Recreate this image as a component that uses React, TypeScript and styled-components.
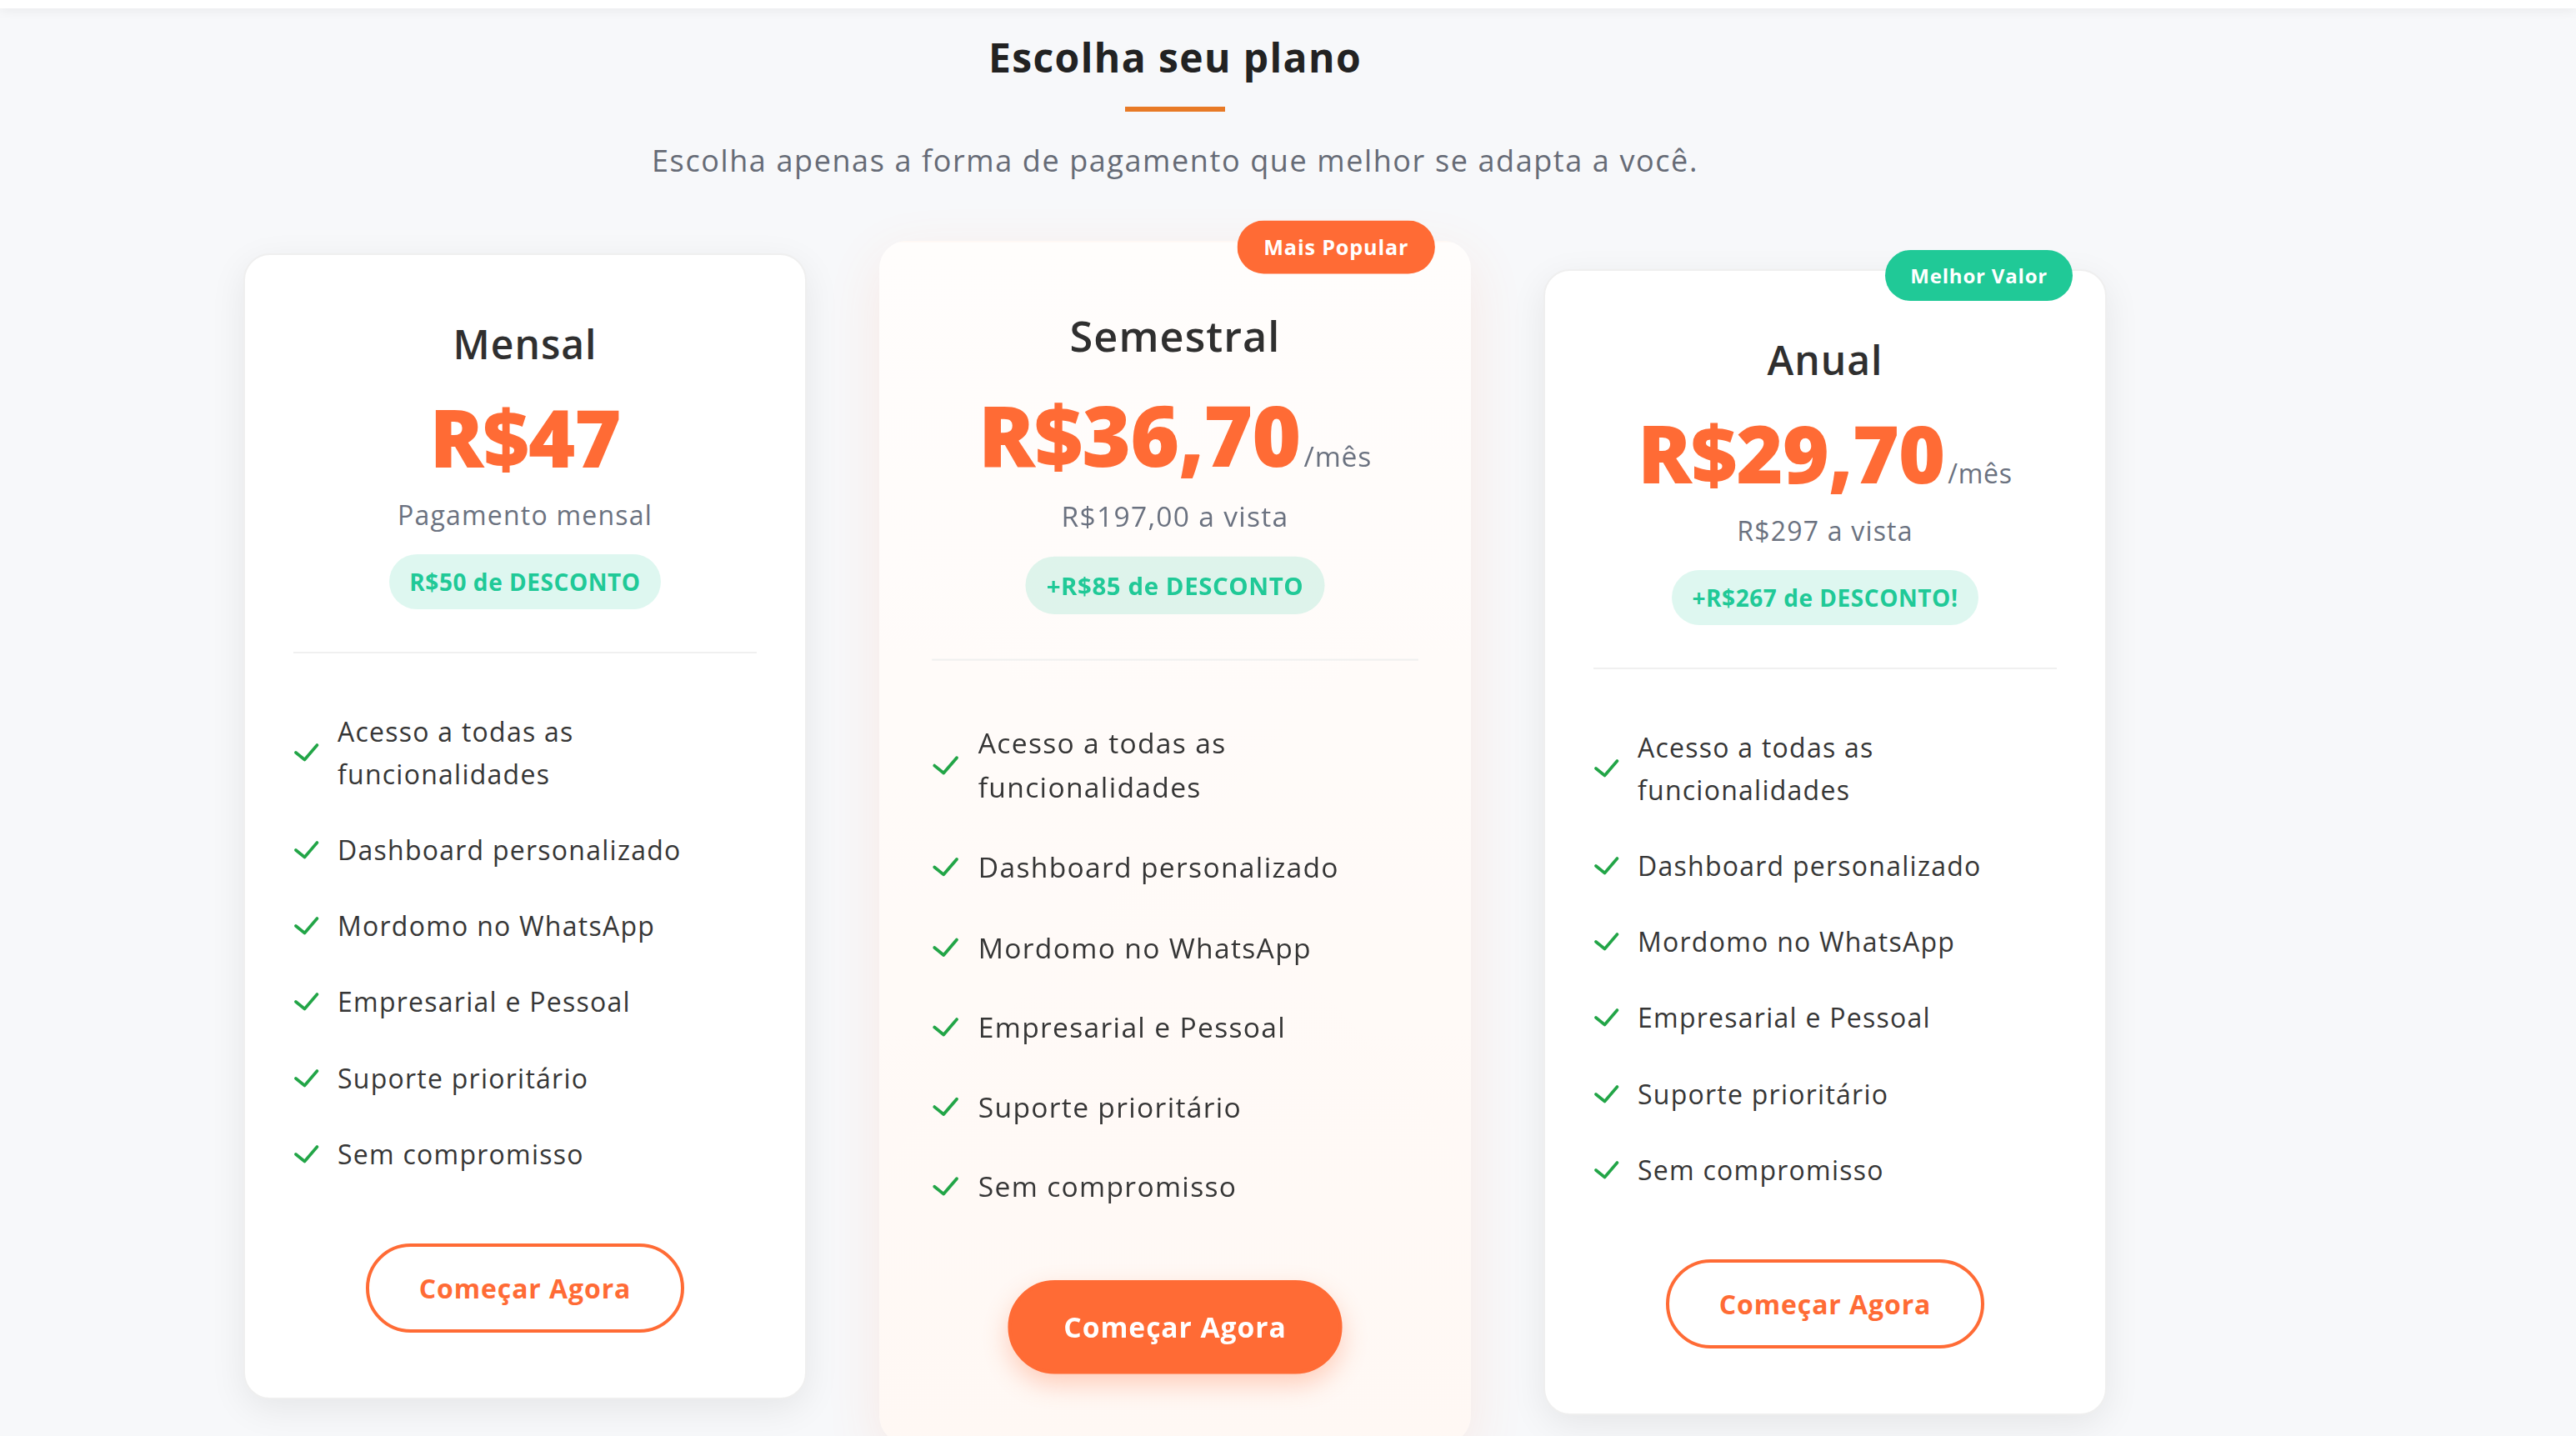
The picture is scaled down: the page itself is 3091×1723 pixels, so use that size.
import React from "react";
import styled, { createGlobalStyle, css } from "styled-components";

const GlobalStyle = createGlobalStyle`
  html, body {
    margin: 0;
    padding: 0;
    background: #f7f8fa;
    overflow: hidden;
  }
  body {
    font-family: "Open Sans", "Noto Sans", sans-serif;
    -webkit-font-smoothing: antialiased;
  }
  * { box-sizing: border-box; }
`;

const Page = styled.div`
  min-height: 1723px;
  background: #f7f8fa;
`;

const TopBar = styled.div`
  height: 10px;
  background: #ffffff;
  box-shadow: 0 2px 14px rgba(0, 0, 0, 0.07);
  position: relative;
  z-index: 2;
`;

const Section = styled.section`
  width: 2820px;
  display: flex;
  flex-direction: column;
  align-items: center;
  padding-top: 30px;
`;

const Title = styled.h2`
  margin: 0;
  font-size: 48px;
  line-height: 57.6px;
  font-weight: 700;
  color: #222222;
  letter-spacing: 1.4px;
`;

const Underline = styled.div`
  width: 120px;
  height: 6px;
  margin-top: 30px;
  background: #e87a26;
`;

const Subtitle = styled.p`
  margin: 32px 0 0;
  font-size: 36px;
  line-height: 54px;
  color: #666b76;
  letter-spacing: 1.6px;
`;

const Grid = styled.div`
  display: grid;
  grid-template-columns: repeat(3, 676px);
  column-gap: 104px;
  align-items: start;
  margin-top: 103px;
`;

const Card = styled.div<{ $featured?: boolean; $lift?: number }>`
  position: relative;
  display: flex;
  flex-direction: column;
  align-items: center;
  padding: 78px 58px;
  border-radius: 32px;
  background: #ffffff;
  border: 2px solid #efefef;
  box-shadow: 0 12px 44px rgba(0, 0, 0, 0.075);
  margin-top: ${(p) => (p.$lift ? -p.$lift : 0)}px;
  ${(p) =>
    p.$featured &&
    css`
      background: linear-gradient(180deg, #fffdfc 0%, #fff8f4 100%);
      border-color: transparent;
      transform: scale(1.05);
      box-shadow: 0 20px 64px rgba(255, 107, 53, 0.11);
      z-index: 1;
    `}
`;

const Tag = styled.div<{ $tone: "orange" | "green" }>`
  position: absolute;
  top: -25px;
  right: 39px;
  padding: 12px 30px;
  border-radius: 999px;
  font-size: 24px;
  line-height: 37px;
  font-weight: 700;
  letter-spacing: 0.8px;
  color: #ffffff;
  background: ${(p) => (p.$tone === "orange" ? "#ff6b35" : "#20c997")};
`;

const PlanName = styled.h3`
  margin: 0;
  font-size: 48px;
  line-height: 57.6px;
  font-weight: 600;
  color: #2f2f2f;
  letter-spacing: 1px;
`;

const PriceRow = styled.div`
  margin-top: 35px;
  font-size: 96px;
  line-height: 96px;
  font-weight: 800;
  color: #ff6b35;
  letter-spacing: -1px;
  white-space: nowrap;
`;

const PerMonth = styled.span`
  font-size: 32px;
  line-height: 32px;
  font-weight: 400;
  color: #6b7280;
  letter-spacing: 0.8px;
  margin-left: 4px;
`;

const Sub = styled.p`
  margin: 22px 0 0;
  font-size: 32px;
  line-height: 48px;
  color: #6b7280;
  letter-spacing: 1.2px;
`;

const Discount = styled.div`
  margin-top: 22.4px;
  padding: 12px 24px;
  border-radius: 999px;
  font-size: 28px;
  line-height: 42px;
  font-weight: 700;
  letter-spacing: 0.55px;
  color: #20c997;
  background: rgba(32, 201, 151, 0.15);
`;

const Divider = styled.hr`
  align-self: stretch;
  margin: 51px 0 0;
  border: 0;
  height: 2px;
  background: #f0f0f0;
`;

const Features = styled.ul`
  align-self: stretch;
  list-style: none;
  margin: 68px 0 0;
  padding: 0;
  display: flex;
  flex-direction: column;
  gap: 40px;
`;

const Feature = styled.li`
  display: flex;
  align-items: center;
  gap: 22px;
  font-size: 32px;
  line-height: 51.2px;
  color: #363636;
  letter-spacing: 1.25px;
`;

const CheckIcon = styled.svg`
  flex-shrink: 0;
  width: 31px;
  height: 23px;
`;

const CTA = styled.button<{ $filled?: boolean }>`
  align-self: center;
  margin-top: 81.6px;
  height: 107px;
  padding: 0 60px;
  border-radius: 999px;
  border: 4px solid #ff6b35;
  font-family: inherit;
  font-size: 32px;
  font-weight: 700;
  letter-spacing: 0.9px;
  cursor: pointer;
  color: ${(p) => (p.$filled ? "#ffffff" : "#ff6b35")};
  background: ${(p) => (p.$filled ? "#ff6b35" : "transparent")};
  box-shadow: ${(p) => (p.$filled ? "0 12px 28px rgba(255, 107, 53, 0.3)" : "none")};
`;

const Check = () => (
  <CheckIcon viewBox="0 0 31 23" fill="none">
    <path
      d="M3 12 L13.5 20.5 L28.5 3"
      stroke="#22a547"
      strokeWidth="3.6"
      strokeLinecap="round"
      strokeLinejoin="round"
    />
  </CheckIcon>
);

const FEATURES = [
  "Acesso a todas as funcionalidades",
  "Dashboard personalizado",
  "Mordomo no WhatsApp",
  "Empresarial e Pessoal",
  "Suporte prioritário",
  "Sem compromisso",
];

type Plan = {
  name: string;
  price: string;
  perMonth?: boolean;
  sub: string;
  discount: string;
  tag?: { label: string; tone: "orange" | "green" };
  featured?: boolean;
  lift?: number;
};

const PLANS: Plan[] = [
  {
    name: "Mensal",
    price: "R$47",
    sub: "Pagamento mensal",
    discount: "R$50 de DESCONTO",
    lift: 19,
  },
  {
    name: "Semestral",
    price: "R$36,70",
    perMonth: true,
    sub: "R$197,00 a vista",
    discount: "+R$85 de DESCONTO",
    tag: { label: "Mais Popular", tone: "orange" },
    featured: true,
  },
  {
    name: "Anual",
    price: "R$29,70",
    perMonth: true,
    sub: "R$297 a vista",
    discount: "+R$267 de DESCONTO!",
    tag: { label: "Melhor Valor", tone: "green" },
  },
];

export default function App() {
  return (
    <Page>
      <GlobalStyle />
      <TopBar />
      <Section>
        <Title>Escolha seu plano</Title>
        <Underline />
        <Subtitle>Escolha apenas a forma de pagamento que melhor se adapta a você.</Subtitle>
        <Grid>
          {PLANS.map((plan) => (
            <Card key={plan.name} $featured={plan.featured} $lift={plan.lift}>
              {plan.tag && <Tag $tone={plan.tag.tone}>{plan.tag.label}</Tag>}
              <PlanName>{plan.name}</PlanName>
              <PriceRow>
                {plan.price}
                {plan.perMonth && <PerMonth>/mês</PerMonth>}
              </PriceRow>
              <Sub>{plan.sub}</Sub>
              <Discount>{plan.discount}</Discount>
              <Divider />
              <Features>
                {FEATURES.map((f) => (
                  <Feature key={f}>
                    <Check />
                    <span>{f}</span>
                  </Feature>
                ))}
              </Features>
              <CTA $filled={plan.featured}>Começar Agora</CTA>
            </Card>
          ))}
        </Grid>
      </Section>
    </Page>
  );
}
